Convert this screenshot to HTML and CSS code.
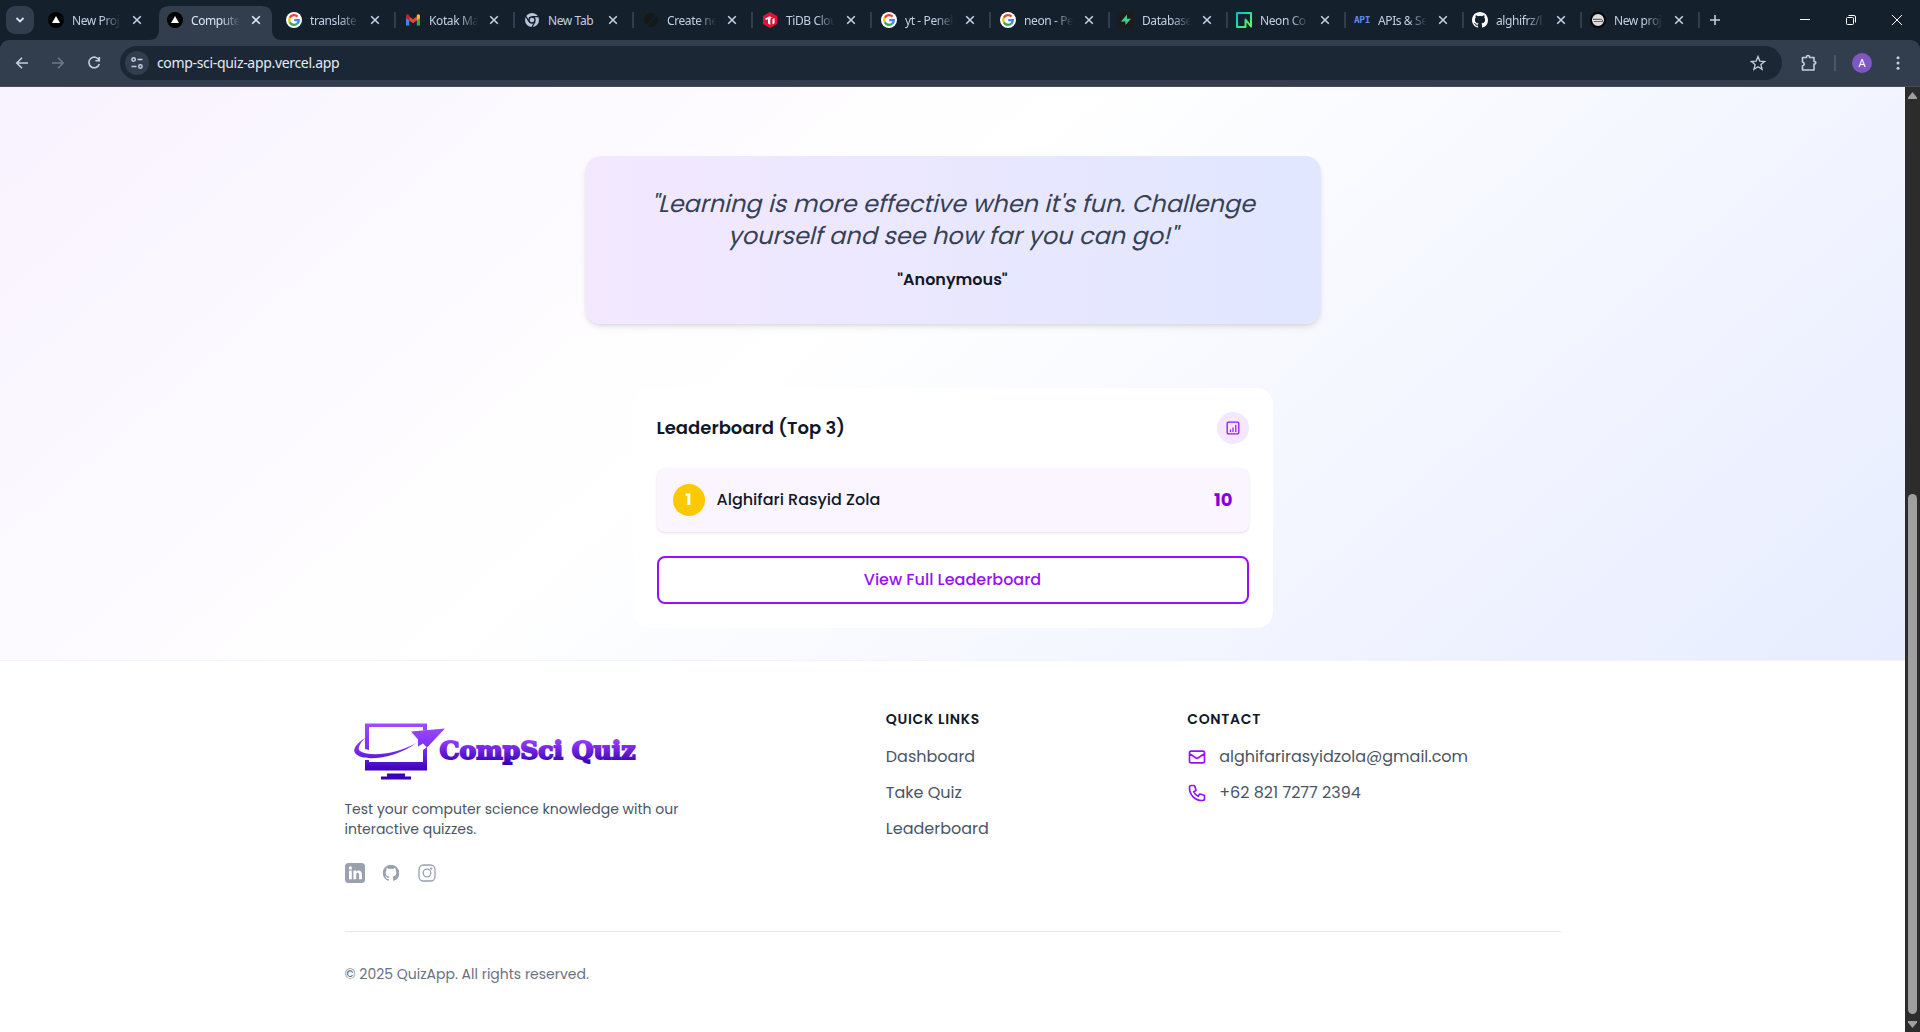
FILE: index.html
```html
<!DOCTYPE html>
<html lang="en">
<head>
<meta charset="utf-8">
<title>CompSci Quiz</title>
<link rel="stylesheet" href="styles.css">
</head>
<body>
<svg class="defs" aria-hidden="true">
  <symbol id="vercel" viewBox="0 0 16 16"><circle cx="8" cy="8" r="8" fill="#000"/><path d="M8 4l4 7H4z" fill="#fff"/></symbol>
  <symbol id="google" viewBox="0 0 16 16"><circle cx="8" cy="8" r="8" fill="#fff"/><g fill="none" stroke-width="2.3"><path d="M11.5 4.6A4.8 4.8 0 0 0 3.8 5.8" stroke="#ea4335"/><path d="M3.8 5.8a4.8 4.8 0 0 0 0 4.4" stroke="#fbbc04"/><path d="M3.8 10.2a4.8 4.8 0 0 0 7.4 1.5" stroke="#34a853"/><path d="M11.2 11.7A4.8 4.8 0 0 0 12.8 8.2H8.2" stroke="#4285f4"/></g></symbol>
  <symbol id="gmail" viewBox="0 0 16 16"><path d="M1 4v9.5h3.2V7z" fill="#4285f4"/><path d="M15 4v9.5h-3.2V7z" fill="#34a853"/><path d="M4.2 4.3v4.2L8 11.3l3.8-2.8V4.3L8 7.2z" fill="#ea4335"/><path d="M1 4.2c0-2 2-2.4 3.2-1.2v5.5L1 6z" fill="#c5221f"/><path d="M15 4.2c0-2-2-2.4-3.2-1.2v5.5L15 6z" fill="#fbbc04"/></symbol>
  <symbol id="chrome" viewBox="0 0 16 16"><circle cx="8" cy="8" r="7" fill="#b9c5da"/><circle cx="8" cy="8" r="3" fill="#b9c5da" stroke="#15202d" stroke-width="1.4"/><path d="M8 4.6h6.4M5 9.8L1.9 4.3M11 9.8L8 15" stroke="#15202d" stroke-width="1.3"/></symbol>
  <symbol id="planet" viewBox="0 0 16 16"><circle cx="8" cy="8" r="7" fill="#171717"/><path d="M3 14L14 3" stroke="#15202d" stroke-width="2"/></symbol>
  <symbol id="tidb" viewBox="0 0 16 16"><path d="M8 0l7 4v8l-7 4-7-4V4z" fill="#dc1535"/><path d="M3 6.8l4.5-2.6L10 5.6 8.3 6.8v6L6 11.6V7L4 8zM10.5 7l2-1v5.2l-2 1.2z" fill="#fff"/></symbol>
  <symbol id="supabase" viewBox="0 0 16 16"><path d="M0 0h16v16H0z" fill="#1c1c1c"/><path d="M9 2.5v4.3h4L7.4 13V9.4H3z" fill="#3ecf8e"/></symbol>
  <symbol id="neon" viewBox="0 0 16 16"><path d="M15 14.5V1H1v14h8.500V7.500L15 14.500z" fill="none" stroke="url(#neon-color)" stroke-width="2" stroke-linejoin="round"/></symbol>
  <symbol id="github" viewBox="0 0 16 16"><path d="M8 0C3.58 0 0 3.58 0 8c0 3.54 2.29 6.53 5.47 7.59.4.07.55-.17.55-.38 0-.19-.01-.82-.01-1.49-2.01.37-2.53-.49-2.69-.94-.09-.23-.48-.94-.82-1.13-.28-.15-.68-.52-.01-.53.63-.01 1.08.58 1.23.82.72 1.21 1.87.87 2.33.66.07-.52.28-.87.51-1.07-1.78-.2-3.64-.89-3.64-3.95 0-.87.31-1.59.82-2.15-.08-.2-.36-1.02.08-2.12 0 0 .67-.21 2.2.82a7.6 7.6 0 0 1 4 0c1.53-1.04 2.2-.82 2.2-.82.44 1.1.16 1.92.08 2.12.51.56.82 1.27.82 2.15 0 3.07-1.87 3.75-3.65 3.95.29.25.54.73.54 1.48 0 1.07-.01 1.93-.01 2.2 0 .21.15.46.55.38A8.01 8.01 0 0 0 16 8c0-4.42-3.58-8-8-8z" fill="currentColor"/></symbol>
  <symbol id="project" viewBox="0 0 16 16"><circle cx="8" cy="8" r="7" fill="#ddd" stroke="#050505" stroke-width="2"/><path d="M3 8V6.700h8l2 1.500V10H4z" fill="#666"/><path d="M3 8.500h9" stroke="#fff" stroke-width=".8"/></symbol>
  <symbol id="close" viewBox="0 0 10 10"><path d="M1.2 1.2l7.6 7.6M8.8 1.2L1.2 8.8" stroke="currentColor" stroke-width="1.6"/></symbol>
  <linearGradient id="neon-color" x1="0" y1="0" x2="1" y2="1"><stop stop-color="#0bd"/><stop offset=".45" stop-color="#1fe0a0"/><stop offset="1" stop-color="#73f655"/></linearGradient>
</svg>

<header class="browser">
  <div class="tab-strip">
    <button class="tab-search"><svg width="10" height="8" viewBox="0 0 10 8"><path d="M1.5 2L5 5.5 8.5 2" fill="none" stroke="currentColor" stroke-width="1.8"/></svg></button>
    <div class="tabs">
      <div class="tab plain"><svg class="fav"><use href="#vercel"/></svg><span class="label">New Proj</span><svg class="x"><use href="#close"/></svg></div>
      <div class="tab active"><svg class="fav"><use href="#vercel"/></svg><span class="label">Compute</span><svg class="x"><use href="#close"/></svg></div>
      <div class="tab"><svg class="fav"><use href="#google"/></svg><span class="label">translate</span><svg class="x"><use href="#close"/></svg></div>
      <div class="tab"><svg class="fav"><use href="#gmail"/></svg><span class="label">Kotak Ma</span><svg class="x"><use href="#close"/></svg></div>
      <div class="tab"><svg class="fav"><use href="#chrome"/></svg><span class="label full">New Tab</span><svg class="x"><use href="#close"/></svg></div>
      <div class="tab"><svg class="fav"><use href="#planet"/></svg><span class="label">Create ne</span><svg class="x"><use href="#close"/></svg></div>
      <div class="tab"><svg class="fav"><use href="#tidb"/></svg><span class="label">TiDB Clou</span><svg class="x"><use href="#close"/></svg></div>
      <div class="tab"><svg class="fav"><use href="#google"/></svg><span class="label">yt - Penel</span><svg class="x"><use href="#close"/></svg></div>
      <div class="tab slim"><svg class="fav"><use href="#google"/></svg><span class="label">neon - Pe</span><svg class="x"><use href="#close"/></svg></div>
      <div class="tab slim"><svg class="fav"><use href="#supabase"/></svg><span class="label">Database</span><svg class="x"><use href="#close"/></svg></div>
      <div class="tab slim"><svg class="fav"><use href="#neon"/></svg><span class="label">Neon Co</span><svg class="x"><use href="#close"/></svg></div>
      <div class="tab slim"><span class="fav api">API</span><span class="label">APIs &amp; Se</span><svg class="x"><use href="#close"/></svg></div>
      <div class="tab slim"><svg class="fav white"><use href="#github"/></svg><span class="label">alghifrz/l</span><svg class="x"><use href="#close"/></svg></div>
      <div class="tab slim"><svg class="fav"><use href="#project"/></svg><span class="label">New proj</span><svg class="x"><use href="#close"/></svg></div>
    </div>
    <svg class="new-tab" viewBox="0 0 12 12"><path d="M6 1v10M1 6h10" stroke="currentColor" stroke-width="1.6"/></svg>
    <div class="window-controls">
      <svg viewBox="0 0 12 12"><path d="M1 5.5h10"/></svg>
      <svg viewBox="0 0 12 12"><rect x="1.5" y="3.5" width="7" height="7" rx="1"/><path d="M3.5 1.5H9a1.5 1.5 0 0 1 1.5 1.5v5.5"/></svg>
      <svg viewBox="0 0 12 12"><path d="M1 1l10 10M11 1L1 11"/></svg>
    </div>
  </div>
  <div class="toolbar">
    <div class="nav">
      <svg viewBox="0 0 14 14"><path d="M13 7H2M7 1.8L1.8 7 7 12.2"/></svg>
      <svg class="off" viewBox="0 0 14 14"><path d="M1 7h11M7 1.8L12.2 7 7 12.2"/></svg>
      <svg viewBox="0 0 14 14"><path d="M12 4.2A5.3 5.3 0 1 0 12.3 8M12.3 1v3.8H8.4"/></svg>
    </div>
    <div class="address">
      <span class="site-info"><svg width="14" height="14" viewBox="0 0 14 14" fill="none" stroke="currentColor" stroke-width="1.5"><circle cx="3.6" cy="3.5" r="1.7"/><path d="M7.5 3.5h5M1.5 10.5h5"/><circle cx="10.4" cy="10.5" r="1.7"/></svg></span>
      <span class="url">comp-sci-quiz-app.vercel.app</span>
      <svg class="star" viewBox="0 0 16 16"><path d="M8 1.6l1.8 4.5 4.8.4-3.7 3.1 1.2 4.8L8 11.8l-4.1 2.6 1.2-4.8L1.400 6.500l4.800-.4z"/></svg>
    </div>
    <svg class="puzzle" viewBox="0 0 18 18"><path d="M2.500 3.500h4V3a1.500 1.500 0 0 1 3 0v.500H14V7.500h.500a1.300 1.300 0 0 1 0 2.600H14v5.900H2.500v-4.300c2.300-.2 2.300-3.300 0-3.500z" stroke-linejoin="round"/></svg>
    <span class="bar"></span>
    <span class="avatar">A</span>
    <svg class="more" viewBox="0 0 4 14"><circle cx="2" cy="1.8" r="1.5"/><circle cx="2" cy="7" r="1.5"/><circle cx="2" cy="12.2" r="1.5"/></svg>
  </div>
</header>

<div class="viewport">
  <div class="page">
    <main class="main">
      <section class="quote">
        <p class="quote-text"><span>"Learning is more effective when it's fun. Challenge</span><br><span>yourself and see how far you can go!"</span></p>
        <p class="quote-author">"Anonymous"</p>
      </section>
      <section class="board">
        <div class="board-head">
          <h2>Leaderboard (Top 3)</h2>
          <span class="board-icon"><svg width="14" height="14" viewBox="0 0 14 14" fill="none" stroke="currentColor"><rect x="1.200" y="1.200" width="11.600" height="11.600" rx="1.200" stroke-width="1.300"/><path d="M4.500 8.500V11M7 6.500V11M9.800 4v7" stroke-width="1.200"/></svg></span>
        </div>
        <div class="row">
          <span class="rank">1</span>
          <span class="name">Alghifari Rasyid Zola</span>
          <span class="score">10</span>
        </div>
        <a class="view-all">View Full Leaderboard</a>
      </section>
    </main>
    <footer class="footer">
      <div class="columns">
        <div class="brand">
          <svg class="logo" width="300" height="76" viewBox="0 -5 300 76">
            <defs>
              <linearGradient id="mark" gradientUnits="userSpaceOnUse" x1="0" y1="10" x2="0" y2="66"><stop stop-color="#a04dff"/><stop offset=".45" stop-color="#7a2df0"/><stop offset=".85" stop-color="#3a00b8"/></linearGradient>
              <linearGradient id="word" gradientUnits="userSpaceOnUse" x1="0" y1="26" x2="0" y2="50"><stop stop-color="#9a3dff"/><stop offset="1" stop-color="#3500b0"/></linearGradient>
            </defs>
            <g fill="url(#mark)">
              <path d="M20 35V9.500h62v7h-4V13H24v23zM20 46h4v2h54V36l4-3v23.500H20zM42 59.500h18v3h6v3H36v-3h6z"/>
              <path d="M20 24C13 28 7 35 10 39c8 10 42 5 61-10C50 41 24 43 15 37c-3-2 0-8 5-13z"/>
              <path d="M66 17.500l34-3-18 19-4-4-5 3v-7z"/>
            </g>
            <text x="94.500" y="44.500" textLength="196" lengthAdjust="spacingAndGlyphs" font-family="DejaVu Serif, serif" font-weight="700" font-size="24" fill="url(#word)" stroke="url(#word)" stroke-width="1.800">CompSci Quiz</text>
          </svg>
          <p class="about">Test your computer science knowledge with our<br>interactive quizzes.</p>
          <div class="social">
            <svg width="20" height="20" viewBox="0 0 20 20"><rect width="20" height="20" rx="3.500" fill="#99a1af"/><g fill="#fff"><circle cx="5.400" cy="4.900" r="1.600"/><path d="M4 7.600h2.800v8.600H4zM8.400 7.600h2.700v1.200c1.500-2.300 5.800-1.700 5.800 2.200v5.200h-2.800v-4.600c0-2.600-2.900-2.400-2.900 0v4.600H8.400z"/></g></svg>
            <svg width="20" height="20"><use href="#github" x="1.700" y="1.700" width="16.600" height="16.600"/></svg>
            <svg width="20" height="20" viewBox="-1 -1 20 20" fill="none" stroke="currentColor" stroke-width="1.300"><rect x="1" y="1" width="16" height="16" rx="4.500"/><circle cx="9" cy="9" r="3.800"/><circle cx="13.300" cy="4.700" r=".5"/></svg>
          </div>
        </div>
        <div class="links">
          <h3>QUICK LINKS</h3>
          <a>Dashboard</a>
          <a>Take Quiz</a>
          <a>Leaderboard</a>
        </div>
        <div class="links">
          <h3>CONTACT</h3>
          <a class="contact"><svg viewBox="0 0 24 24"><path d="M3 8l7.890 5.260a2 2 0 0 0 2.220 0L21 8M5 19h14a2 2 0 0 0 2-2V7a2 2 0 0 0-2-2H5a2 2 0 0 0-2 2v10a2 2 0 0 0 2 2z"/></svg>alghifarirasyidzola@gmail.com</a>
          <a class="contact"><svg viewBox="0 0 24 24"><path d="M3 5a2 2 0 0 1 2-2h3.280a1 1 0 0 1 .948.684l1.498 4.493a1 1 0 0 1-.502 1.210l-2.257 1.130a11.042 11.042 0 0 0 5.516 5.516l1.130-2.257a1 1 0 0 1 1.210-.502l4.493 1.498a1 1 0 0 1 .684.949V19a2 2 0 0 1-2 2h-1C9.716 21 3 14.284 3 6V5z"/></svg>+62 821 7277 2394</a>
        </div>
      </div>
      <p class="copyright">© 2025 QuizApp. All rights reserved.</p>
    </footer>
  </div>
  <div class="scrollbar">
    <svg width="9" height="7" viewBox="0 0 9 7"><path d="M4.500 0L9 5.500V7H0V5.500z"/></svg>
    <span class="thumb"></span>
    <svg width="9" height="7" viewBox="0 0 9 7"><path d="M4.500 7L9 1.500V0H0v1.500z"/></svg>
  </div>
</div>
</body>
</html>
```
FILE: styles.css
```css
* { box-sizing: border-box; }
body { margin: 0; height: 1032px; overflow: hidden; font-family: Poppins, Inter, "Noto Sans", sans-serif; }
h2, h3, p { margin: 0; }
svg { display: block; flex: none; }
.defs { position: absolute; width: 0; height: 0; }

/* Browser frame */
.browser { height: 87px; background: #15202d; color: #c3cfe2; font-family: "Noto Sans", sans-serif; }
.tab-strip { display: flex; height: 40px; padding-left: 6px; }
.tab-search { display: flex; align-items: center; justify-content: center; width: 28px; height: 28px; margin: 6px 6px 0 0; padding: 0; border: 0; border-radius: 9px; background: #323d4d; color: #dbe3f0; }
.tabs { display: flex; }
.tab { position: relative; display: flex; align-items: center; width: 119px; height: 34px; margin-top: 6px; padding: 0 0 6px 8px; }
.tab.slim { width: 118px; }
.tab::after { content: ""; position: absolute; left: 116px; top: 6px; width: 2px; height: 16px; background: #323d4d; }
.tab.plain::after, .tab.active::after { display: none; }
.tab.active { color: #dde5f2; }
.tab.active::before { content: ""; position: absolute; left: -10px; top: 0; z-index: 0; width: 133px; height: 34px; background: #323d4d; clip-path: path("M0 34Q10 34 10 24V10Q10 0 20 0H113Q123 0 123 10V24Q123 34 133 34Z"); }
.tab > * { position: relative; }
.fav { flex: none; width: 16px; height: 16px; }
.white { color: #fff; }
.api { color: #5b87f5; font: 700 9.500px/16px "DejaVu Sans Mono", monospace; letter-spacing: -.4px; }
.label { width: 49px; margin: 2px 12px 0 8px; white-space: nowrap; font-size: 12px; line-height: 16px; letter-spacing: -.4px; mask-image: linear-gradient(90deg, #000 62%, transparent); }
.label.full { mask-image: none; }
.x { width: 10px; height: 10px; margin-left: -1px; }
.new-tab { width: 12px; height: 12px; margin: 14px 0 0 9px; }
.window-controls { display: flex; gap: 34px; margin: 14px 17px 0 auto; fill: none; stroke: #fff; stroke-width: 1; }
.window-controls svg { width: 12px; height: 12px; }
.toolbar { display: flex; align-items: center; height: 47px; padding: 0 20px 1px 15px; border-bottom: 1px solid #474d56; border-radius: 9px 9px 0 0; background: #323d4d; }
.nav { display: flex; gap: 22px; width: 105px; fill: none; stroke: currentColor; stroke-width: 1.600; }
.nav svg { width: 14px; height: 14px; }
.off { opacity: .4; }
.address { display: flex; align-items: center; width: 1663px; height: 34px; padding: 0 16px 0 5px; border-radius: 17px; background: #1c2736; }
.site-info { display: flex; align-items: center; justify-content: center; width: 24px; height: 24px; margin-right: 8px; border-radius: 50%; background: #323d4d; }
.url { flex: 1; color: #e5eaf3; font-size: 14px; letter-spacing: -.32px; }
.star { width: 16px; height: 16px; fill: none; stroke: currentColor; stroke-width: 1.300; }
.puzzle { width: 18px; height: 18px; margin: 0 16px 0 18px; fill: none; stroke: currentColor; stroke-width: 1.600; }
.bar { width: 2px; height: 16px; background: #4a5669; }
.avatar { width: 20px; height: 20px; margin: 0 24px 0 16px; border-radius: 50%; background: #7e57c2; color: #fff; text-align: center; font-size: 11px; line-height: 20px; }
.more { width: 4px; height: 14px; fill: currentColor; }

/* Page */
.viewport { display: flex; height: 945px; }
.page { width: 1905px; background: #fff; }
.main { height: 573px; padding-top: 69px; background: linear-gradient(to bottom right, #f3e8ff, #fff 50%, #e0e7ff) 0 -716px / 1905px 1661px no-repeat; }
.quote { width: 736px; height: 168px; margin: 0 auto 64px; padding: 32px; border-radius: 16px; background: linear-gradient(90deg, #f3e8ff, #e0e7ff); box-shadow: 0 4px 6px -1px #0000001a, 0 2px 4px -2px #0000001a; text-align: center; white-space: nowrap; }
.quote-text { color: #364153; font-size: 24px; line-height: 32px; }
.quote-text span { display: inline-block; transform: skewX(-14deg); transform-origin: 50% 75%; }
.quote-author { margin-top: 16px; color: #101828; font-size: 16px; font-weight: 600; line-height: 24px; }
.board { width: 640px; height: 240px; margin: 0 auto; padding: 24px; border-radius: 16px; background: #fff; color: #101828; }
.board-head { display: flex; align-items: center; justify-content: space-between; height: 32px; margin-bottom: 24px; }
h2 { font-size: 18px; font-weight: 600; line-height: 28px; }
.board-icon { display: flex; align-items: center; justify-content: center; width: 32px; height: 32px; border-radius: 50%; background: #f3e8ff; color: #9810fa; }
.row { display: flex; align-items: center; height: 64px; margin-bottom: 24px; padding: 0 16px; border-radius: 8px; background: #faf5ff; box-shadow: 0 1px 3px #0000001a, 0 1px 2px -1px #0000001a; }
.rank { width: 32px; height: 32px; margin-right: 12px; border-radius: 50%; background: #fcc800; color: #fff; text-align: center; font-weight: 700; line-height: 32px; }
.name { flex: 1; padding-bottom: 1px; font-weight: 500; line-height: 24px; }
.score { padding-bottom: 1px; color: #8200db; font-size: 18px; font-weight: 700; line-height: 28px; }
.view-all { display: flex; align-items: center; justify-content: center; height: 48px; border: 2px solid #9810fa; border-radius: 8px; color: #9810fa; font-weight: 500; line-height: 24px; }

.footer { height: 372px; padding: 48px 344.500px 0; border-top: 1px solid #f3f4f6; }
.columns { display: grid; grid-template-columns: 541.300px 301.400px 1fr; height: 223px; border-bottom: 1px solid #e5e7eb; }
.about { margin-top: 14px; color: #4a5565; font-size: 14px; line-height: 20px; white-space: nowrap; }
.social { display: flex; align-items: center; gap: 16px; margin-top: 24px; color: #99a1af; }
.links { display: flex; flex-direction: column; align-items: flex-start; gap: 12px; color: #4a5565; line-height: 24px; white-space: nowrap; }
h3 { margin-bottom: 4px; color: #101828; font-size: 14px; font-weight: 600; line-height: 20px; letter-spacing: .7px; }
.contact { display: flex; align-items: center; gap: 12px; }
.contact svg { width: 20px; height: 20px; fill: none; stroke: #9810fa; stroke-width: 2; stroke-linecap: round; stroke-linejoin: round; }
.copyright { margin-top: 32px; color: #6a7282; font-size: 14px; line-height: 20px; }

.scrollbar { display: flex; flex-direction: column; align-items: center; width: 15px; padding: 5px 0 4px; background: #2c2c2c; fill: #9f9f9f; }
.thumb { width: 9px; height: 520px; margin: auto 0 7px; border-radius: 5px; background: #9f9f9f; }
```
